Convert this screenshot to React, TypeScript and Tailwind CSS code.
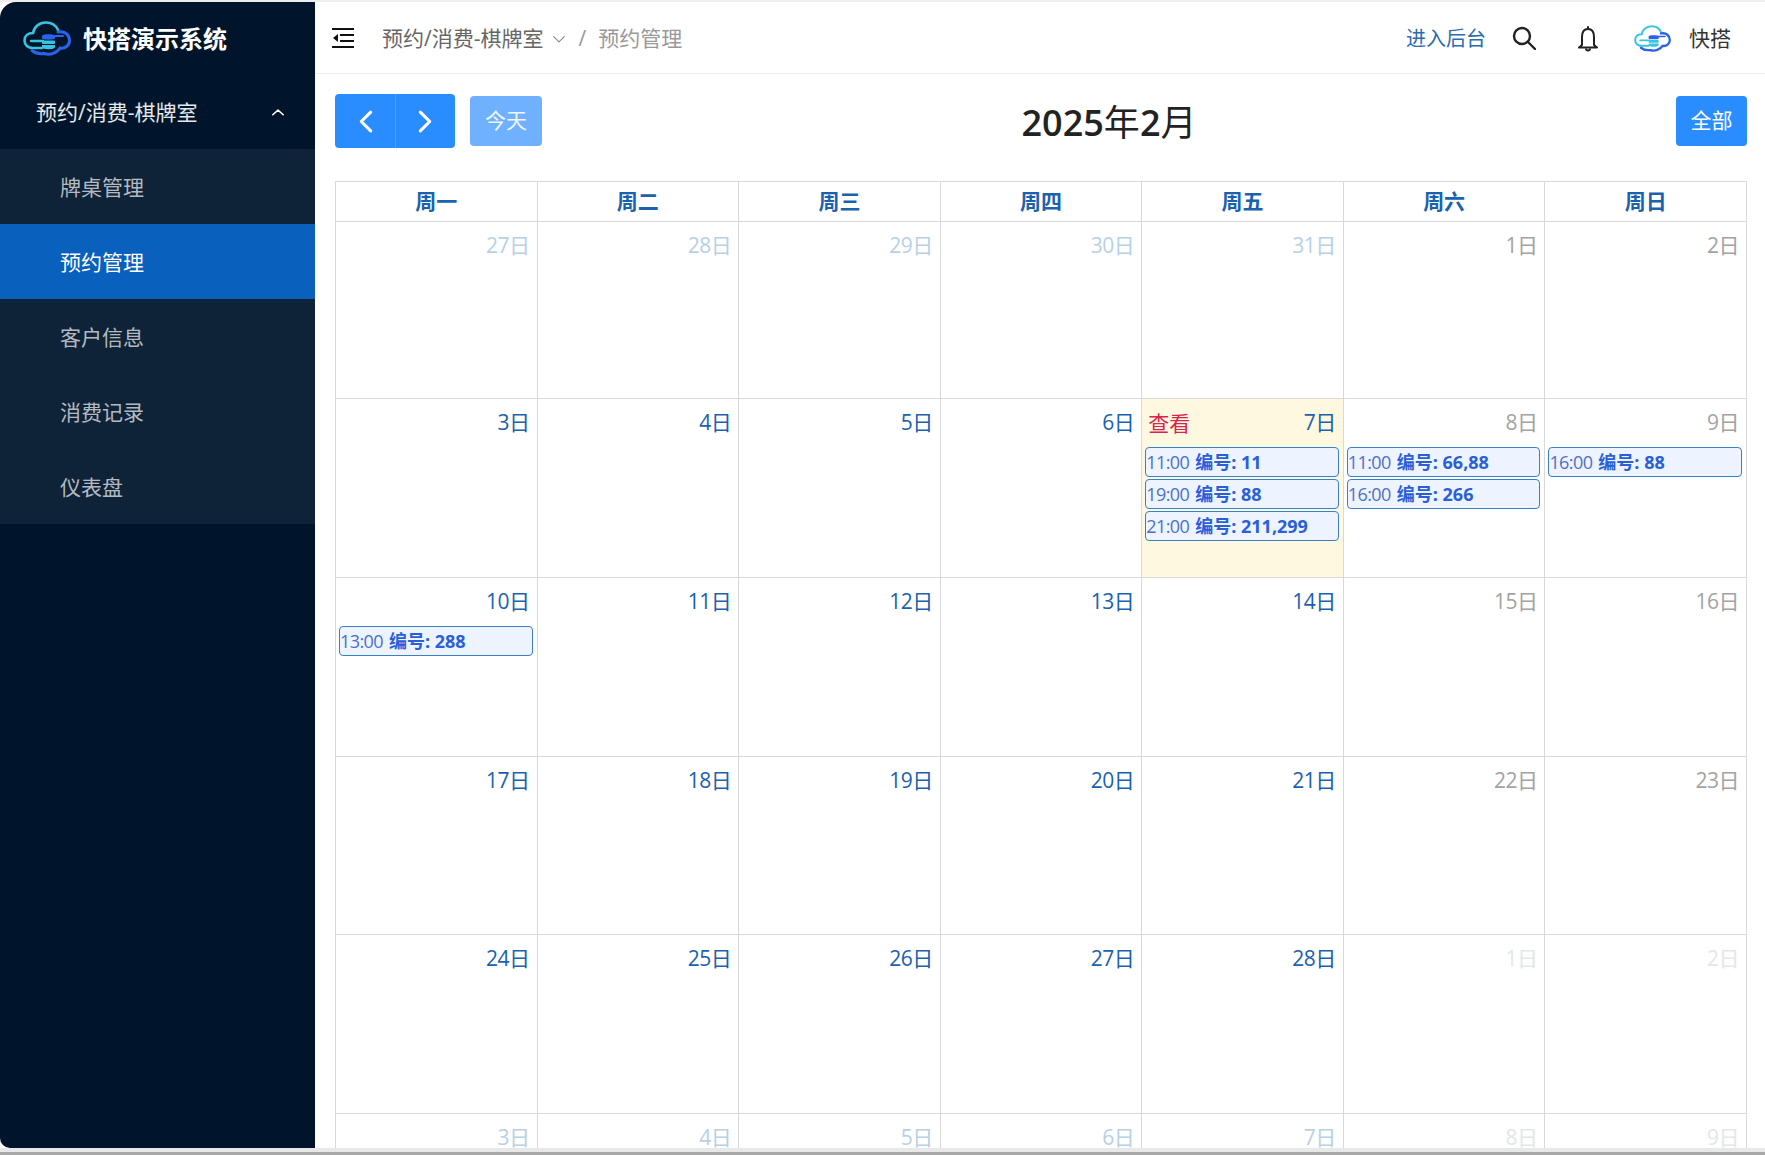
const FONT = "font-['Open_Sans','Noto_Sans_CJK_SC',sans-serif]";

function CloudLogo({ className }: { className: string }) {
  return (
    <svg viewBox="0 0 48 35" className={className} fill="none">
      <path d="M19 27H10C5 27 1.500 24 1.500 19.500C1.500 15 5 12 10 12C11 6 16 1.500 23 1.500C29 1.500 33 4.500 35 9" stroke="#38c4dc" strokeWidth="2.600" strokeLinecap="round" />
      <path d="M35 11C42 9.500 46.500 14 46.500 19.500C46.500 24.500 42 28 37 27C34 32 27 34.500 21 32.500C17 33 12 32 9 29.500" stroke="#2a62e8" strokeWidth="3" strokeLinecap="round" />
      <path d="M8 20H20" stroke="#38c4dc" strokeWidth="2.400" strokeLinecap="round" />
      <path d="M30 15H40" stroke="#2a62e8" strokeWidth="2" strokeLinecap="round" />
      <path d="M19 15C19 12.500 32 12.500 32 15V17.500C32 19 19 19 19 17.500Z" fill="#2a62e8" />
      <rect x="19" y="19.500" width="13" height="3.500" rx="1" fill="#38c4dc" />
      <path d="M19 24H32V26C32 29 19 29 19 26Z" fill="#38c4dc" />
    </svg>
  );
}

function Chevron({ dir, className, width = 2 }: { dir: "up" | "down" | "left" | "right"; className: string; width?: number }) {
  const d = {
    up: "M3 15L12 7L21 15",
    down: "M3 8L12 17L21 8",
    left: "M16 3L7 12L16 21",
    right: "M8 3L17 12L8 21",
  }[dir];
  return (
    <svg viewBox="0 0 24 24" className={className} fill="none" stroke="currentColor" strokeWidth={width} strokeLinecap="round" strokeLinejoin="round">
      <path d={d} />
    </svg>
  );
}

const MENU = ["牌桌管理", "预约管理", "客户信息", "消费记录", "仪表盘"];

function Sidebar() {
  return (
    <aside className="w-[315px] shrink-0 bg-[#00152b] rounded-tl-[16px] rounded-bl-[10px] overflow-hidden">
      <div className="h-[73px] flex items-center pl-[23px] gap-[12px]">
        <CloudLogo className="w-[48px] h-[35px]" />
        <span className="text-[24px] font-bold text-white">快搭演示系统</span>
      </div>
      <div className="h-[74px] flex items-center justify-between pl-[36px] pr-[30px] pt-[2px] text-[21px] text-white/90">
        <span>预约/消费-棋牌室</span>
        <Chevron dir="up" className="w-[14px] h-[14px] text-white" width={2.500} />
      </div>
      <ul className="bg-[#0e2238]">
        {MENU.map((m) => (
          <li
            key={m}
            className={m === "预约管理" ? "h-[75px] flex items-center pl-[60px] pt-[2px] text-[21px] text-white bg-[#0960bd]" : "h-[75px] flex items-center pl-[60px] pt-[2px] text-[21px] text-white/70"}
          >
            {m}
          </li>
        ))}
      </ul>
    </aside>
  );
}

function TopBar() {
  return (
    <header className="h-[72px] shrink-0 flex items-center border-b border-[#eeeeee] pl-[17px] pr-[34px] pt-[2px] text-[21px]">
      <svg viewBox="0 0 22 20" className="w-[22px] h-[20px] mb-[2px] text-[#111]" fill="currentColor">
        <rect x="0" y="0" width="22" height="2" />
        <rect x="8" y="6" width="14" height="2" />
        <rect x="8" y="12" width="14" height="2" />
        <rect x="0" y="18" width="22" height="2" />
        <path d="M6 6V14L1 10Z" />
      </svg>
      <span className="ml-[28px] text-[#666666]">预约/消费-棋牌室</span>
      <Chevron dir="down" className="ml-[9px] w-[14px] h-[14px] text-[#888888]" width={1.800} />
      <span className="ml-[12px] text-[#999999]">/</span>
      <span className="ml-[12px] text-[#999999]">预约管理</span>
      <span className="ml-auto text-[20px] text-[#2a6cb0]">进入后台</span>
      <svg viewBox="0 0 24 24" className="ml-[26px] mb-[2px] w-[24px] h-[24px] text-[#222]" fill="none" stroke="currentColor" strokeWidth="2.400" strokeLinecap="round">
        <circle cx="10" cy="10" r="8" />
        <path d="M16 16L23 23" />
      </svg>
      <svg viewBox="0 0 22 26" className="ml-[41px] w-[22px] h-[26px] text-[#222]" fill="none" stroke="currentColor" strokeWidth="2" strokeLinejoin="round">
        <path d="M11 3C6.500 3 5 7 5 11V19L2 21.500H20L17 19V11C17 7 15.500 3 11 3Z" />
        <path d="M11 1V3" strokeLinecap="round" />
        <path d="M9 22.500C9 25 13 25 13 22.500" />
      </svg>
      <CloudLogo className="ml-[35px] w-[37px] h-[27px]" />
      <span className="ml-[18px] text-[#333333]">快搭</span>
    </header>
  );
}

type Ev = { time: string; no: string };
type Cell = { label: string; tone: string; today?: boolean; events?: Ev[] };

const OUT = "text-[#b7d0e6]";
const CUR = "text-[#1a62ad]";
const WKD = "text-[#a3a3a3]";
const OUTW = "text-[#e3e6ea]";

const ROWS: { h: string; cells: Cell[] }[] = [
  {
    h: "h-[177px]",
    cells: [
      { label: "27日", tone: OUT },
      { label: "28日", tone: OUT },
      { label: "29日", tone: OUT },
      { label: "30日", tone: OUT },
      { label: "31日", tone: OUT },
      { label: "1日", tone: WKD },
      { label: "2日", tone: WKD },
    ],
  },
  {
    h: "h-[179px]",
    cells: [
      { label: "3日", tone: CUR },
      { label: "4日", tone: CUR },
      { label: "5日", tone: CUR },
      { label: "6日", tone: CUR },
      {
        label: "7日",
        tone: CUR,
        today: true,
        events: [
          { time: "11:00", no: "11" },
          { time: "19:00", no: "88" },
          { time: "21:00", no: "211,299" },
        ],
      },
      {
        label: "8日",
        tone: WKD,
        events: [
          { time: "11:00", no: "66,88" },
          { time: "16:00", no: "266" },
        ],
      },
      { label: "9日", tone: WKD, events: [{ time: "16:00", no: "88" }] },
    ],
  },
  {
    h: "h-[179px]",
    cells: [
      { label: "10日", tone: CUR, events: [{ time: "13:00", no: "288" }] },
      { label: "11日", tone: CUR },
      { label: "12日", tone: CUR },
      { label: "13日", tone: CUR },
      { label: "14日", tone: CUR },
      { label: "15日", tone: WKD },
      { label: "16日", tone: WKD },
    ],
  },
  {
    h: "h-[178px]",
    cells: [
      { label: "17日", tone: CUR },
      { label: "18日", tone: CUR },
      { label: "19日", tone: CUR },
      { label: "20日", tone: CUR },
      { label: "21日", tone: CUR },
      { label: "22日", tone: WKD },
      { label: "23日", tone: WKD },
    ],
  },
  {
    h: "h-[179px]",
    cells: [
      { label: "24日", tone: CUR },
      { label: "25日", tone: CUR },
      { label: "26日", tone: CUR },
      { label: "27日", tone: CUR },
      { label: "28日", tone: CUR },
      { label: "1日", tone: OUTW },
      { label: "2日", tone: OUTW },
    ],
  },
  {
    h: "h-[179px]",
    cells: [
      { label: "3日", tone: OUT },
      { label: "4日", tone: OUT },
      { label: "5日", tone: OUT },
      { label: "6日", tone: OUT },
      { label: "7日", tone: OUT },
      { label: "8日", tone: OUTW },
      { label: "9日", tone: OUTW },
    ],
  },
];

const WEEK = ["周一", "周二", "周三", "周四", "周五", "周六", "周日"];

function DayCell({ cell }: { cell: Cell }) {
  return (
    <div className={cell.today ? "min-w-0 border-r border-b border-[#d9d9d9] bg-[#fff8e1]" : "min-w-0 border-r border-b border-[#d9d9d9]"}>
      <div className="h-[48px] flex items-start justify-between pl-[6px] pr-[7px] pt-[9px] text-[21px] leading-[28px]">
        <span className="mt-[1px] text-[#d8234f]">{cell.today ? "查看" : ""}</span>
        <span className={`tracking-[-0.5px] ${cell.tone}`}>{cell.label}</span>
      </div>
      <div className="flex flex-col gap-[2px] pl-[3px] pr-[4px]">
        {cell.events?.map((e) => (
          <div key={e.time} className="h-[30px] flex items-center gap-[6px] border border-[#3b7fc4] rounded-[4px] bg-[#edf4ff] text-[18px] whitespace-nowrap">
            <span className="tracking-[-0.6px] text-[#4d70c8]">{e.time}</span>
            <b className="font-bold text-[#2b5fd9]">编号: {e.no}</b>
          </div>
        ))}
      </div>
    </div>
  );
}

function Calendar() {
  return (
    <main className="flex-1 min-h-0 overflow-hidden pl-[20px] pr-[18px]">
      <div className="h-[107px] flex items-center justify-between pb-[14px]">
        <div className="flex items-center gap-[15px]">
          <div className="flex h-[54px] w-[120px] rounded-[4px] bg-[#2a8dff] text-white">
            <button className="flex-1 flex items-center justify-center pl-[3px] pt-[1px] border-r border-[#4ea0fb]">
              <Chevron dir="left" className="w-[25px] h-[25px]" width={3} />
            </button>
            <button className="flex-1 flex items-center justify-center pr-[2px] pt-[1px]">
              <Chevron dir="right" className="w-[25px] h-[25px]" width={3} />
            </button>
          </div>
          <button className="h-[50px] w-[72px] pt-[1px] rounded-[4px] bg-[#6fb1ff] text-white/90 text-[21px]">今天</button>
        </div>
        <h2 className="pt-[4px] text-[36px] leading-none text-[#222222]">
          <span className="font-semibold">2025</span>年<span className="font-semibold">2</span>月
        </h2>
        <button className="h-[50px] w-[71px] pt-[1px] rounded-[4px] bg-[#2a8dff] text-white text-[21px]">全部</button>
      </div>
      <div className="border-l border-t border-[#d9d9d9]">
        <div className="grid grid-cols-7 h-[40px]">
          {WEEK.map((w) => (
            <div key={w} className="flex items-center justify-center pt-[1px] border-r border-b border-[#d9d9d9] text-[21px] font-bold text-[#1a62ad]">
              {w}
            </div>
          ))}
        </div>
        {ROWS.map((r, i) => (
          <div key={i} className={`grid grid-cols-7 ${r.h}`}>
            {r.cells.map((c, j) => (
              <DayCell key={j} cell={c} />
            ))}
          </div>
        ))}
      </div>
    </main>
  );
}

export default function App() {
  return (
    <div className={`h-[1155px] flex flex-col overflow-hidden bg-white ${FONT}`}>
      <div className="h-[2px] shrink-0 bg-[#eeeeee]" />
      <div className="flex flex-1 min-h-0">
        <Sidebar />
        <div className="flex-1 min-w-0 flex flex-col">
          <TopBar />
          <Calendar />
        </div>
      </div>
      <div className="h-[4px] shrink-0 bg-[#e8e8e8]" />
      <div className="h-[3px] shrink-0 bg-[#a8a8a8]" />
    </div>
  );
}
